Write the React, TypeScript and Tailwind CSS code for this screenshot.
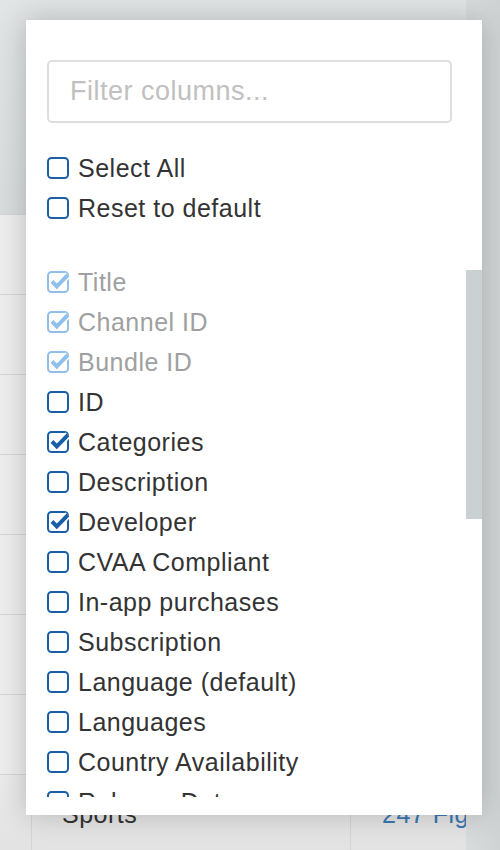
import { useState } from "react";

type Column = { label: string; checked: boolean; locked?: boolean };

const COLUMNS: Column[] = [
  { label: "Title", checked: true, locked: true },
  { label: "Channel ID", checked: true, locked: true },
  { label: "Bundle ID", checked: true, locked: true },
  { label: "ID", checked: false },
  { label: "Categories", checked: true },
  { label: "Description", checked: false },
  { label: "Developer", checked: true },
  { label: "CVAA Compliant", checked: false },
  { label: "In-app purchases", checked: false },
  { label: "Subscription", checked: false },
  { label: "Language (default)", checked: false },
  { label: "Languages", checked: false },
  { label: "Country Availability", checked: false },
  { label: "Release Date", checked: false },
];

function CheckIcon({ checked, muted }: { checked: boolean; muted?: boolean }) {
  const color = muted ? "#8fbfea" : "#1a5fa6";
  return (
    <svg width="22" height="22" viewBox="0 0 22 22" className="shrink-0">
      <rect x="1" y="1" width="20" height="20" rx="3.5" fill="none" stroke={color} strokeWidth="2" />
      {checked && (
        <>
          <path d="M5 10.5 L9.8 15.3 L21 4" fill="none" stroke="#fff" strokeWidth="7" strokeLinejoin="miter" />
          <path d="M5 10.5 L9.8 15.3 L21 4" fill="none" stroke={color} strokeWidth="4" strokeLinejoin="miter" />
        </>
      )}
    </svg>
  );
}

function Row({ label, checked, muted, onToggle }: { label: string; checked: boolean; muted?: boolean; onToggle?: () => void }) {
  return (
    <div onClick={onToggle} className="flex items-center gap-[9px] h-10 cursor-pointer select-none">
      <CheckIcon checked={checked} muted={muted} />
      <span className={muted ? "text-[#a0a0a0]" : "text-[#333]"}>{label}</span>
    </div>
  );
}

export default function App() {
  const [cols, setCols] = useState(COLUMNS);

  const toggle = (i: number) => {
    setCols(prev => prev.map((c, j) => (j === i && !c.locked ? { ...c, checked: !c.checked } : c)));
  };

  return (
    <div className="relative w-[500px] h-[850px] overflow-hidden bg-[#ececec] font-['Liberation_Sans',Arial,sans-serif]">
      {/* page behind the dropdown */}
      <div className="h-[215px] bg-gradient-to-b from-[#e2e5e6] to-[#d9dcdd] border-b border-[#d4d6d7]" />
      {Array.from({ length: 7 }).map((_, i) => (
        <div key={i} className="h-20 border-b border-[#d6d6d6] bg-[#eeeeee]" />
      ))}
      <div className="flex h-20 bg-gradient-to-b from-[#ebebeb] to-[#e2e2e2]">
        <div className="w-[31px]" />
        <div className="w-[320px] border-l border-r border-[#d4d4d4] pl-[30px] flex items-center text-[25px] tracking-[0.5px] text-[#333]">
          Sports
        </div>
        <div className="flex-1 pl-[31px] flex items-center text-[25px] tracking-[0.5px] text-[#3b77b3] whitespace-nowrap overflow-hidden">
          247 Figures
        </div>
      </div>
      <div className="absolute top-0 right-0 w-[34px] h-full bg-gradient-to-r from-[#d9dcdd] to-[#d0d3d4]" />

      {/* column picker dropdown */}
      <div className="absolute left-[26px] top-[20px] w-[456px] h-[795px] bg-white shadow-[0_0_28px_rgba(0,0,0,0.22)] pt-10 pb-[18px]">
        <div className="h-full overflow-hidden pl-[21px] pr-[30px] text-[25px] tracking-[0.5px] leading-none">
          <input
            placeholder="Filter columns..."
            className="w-[405px] h-[63px] border-2 border-[#dedede] rounded-[5px] px-[21px] text-[27px] tracking-[0.5px] text-[#333] placeholder:text-[#c0c0c0] outline-none"
          />
          <div className="mt-[25px]">
            <Row label="Select All" checked={false} onToggle={() => setCols(p => p.map(c => ({ ...c, checked: true })))} />
            <Row label="Reset to default" checked={false} onToggle={() => setCols(COLUMNS)} />
          </div>
          <div className="mt-[34px]">
            {cols.map((c, i) => (
              <Row key={c.label} label={c.label} checked={c.checked} muted={c.locked} onToggle={() => toggle(i)} />
            ))}
          </div>
        </div>
        <div className="absolute left-[440px] top-[250px] w-4 h-[249px] bg-[#c9d1d3]" />
      </div>
    </div>
  );
}
